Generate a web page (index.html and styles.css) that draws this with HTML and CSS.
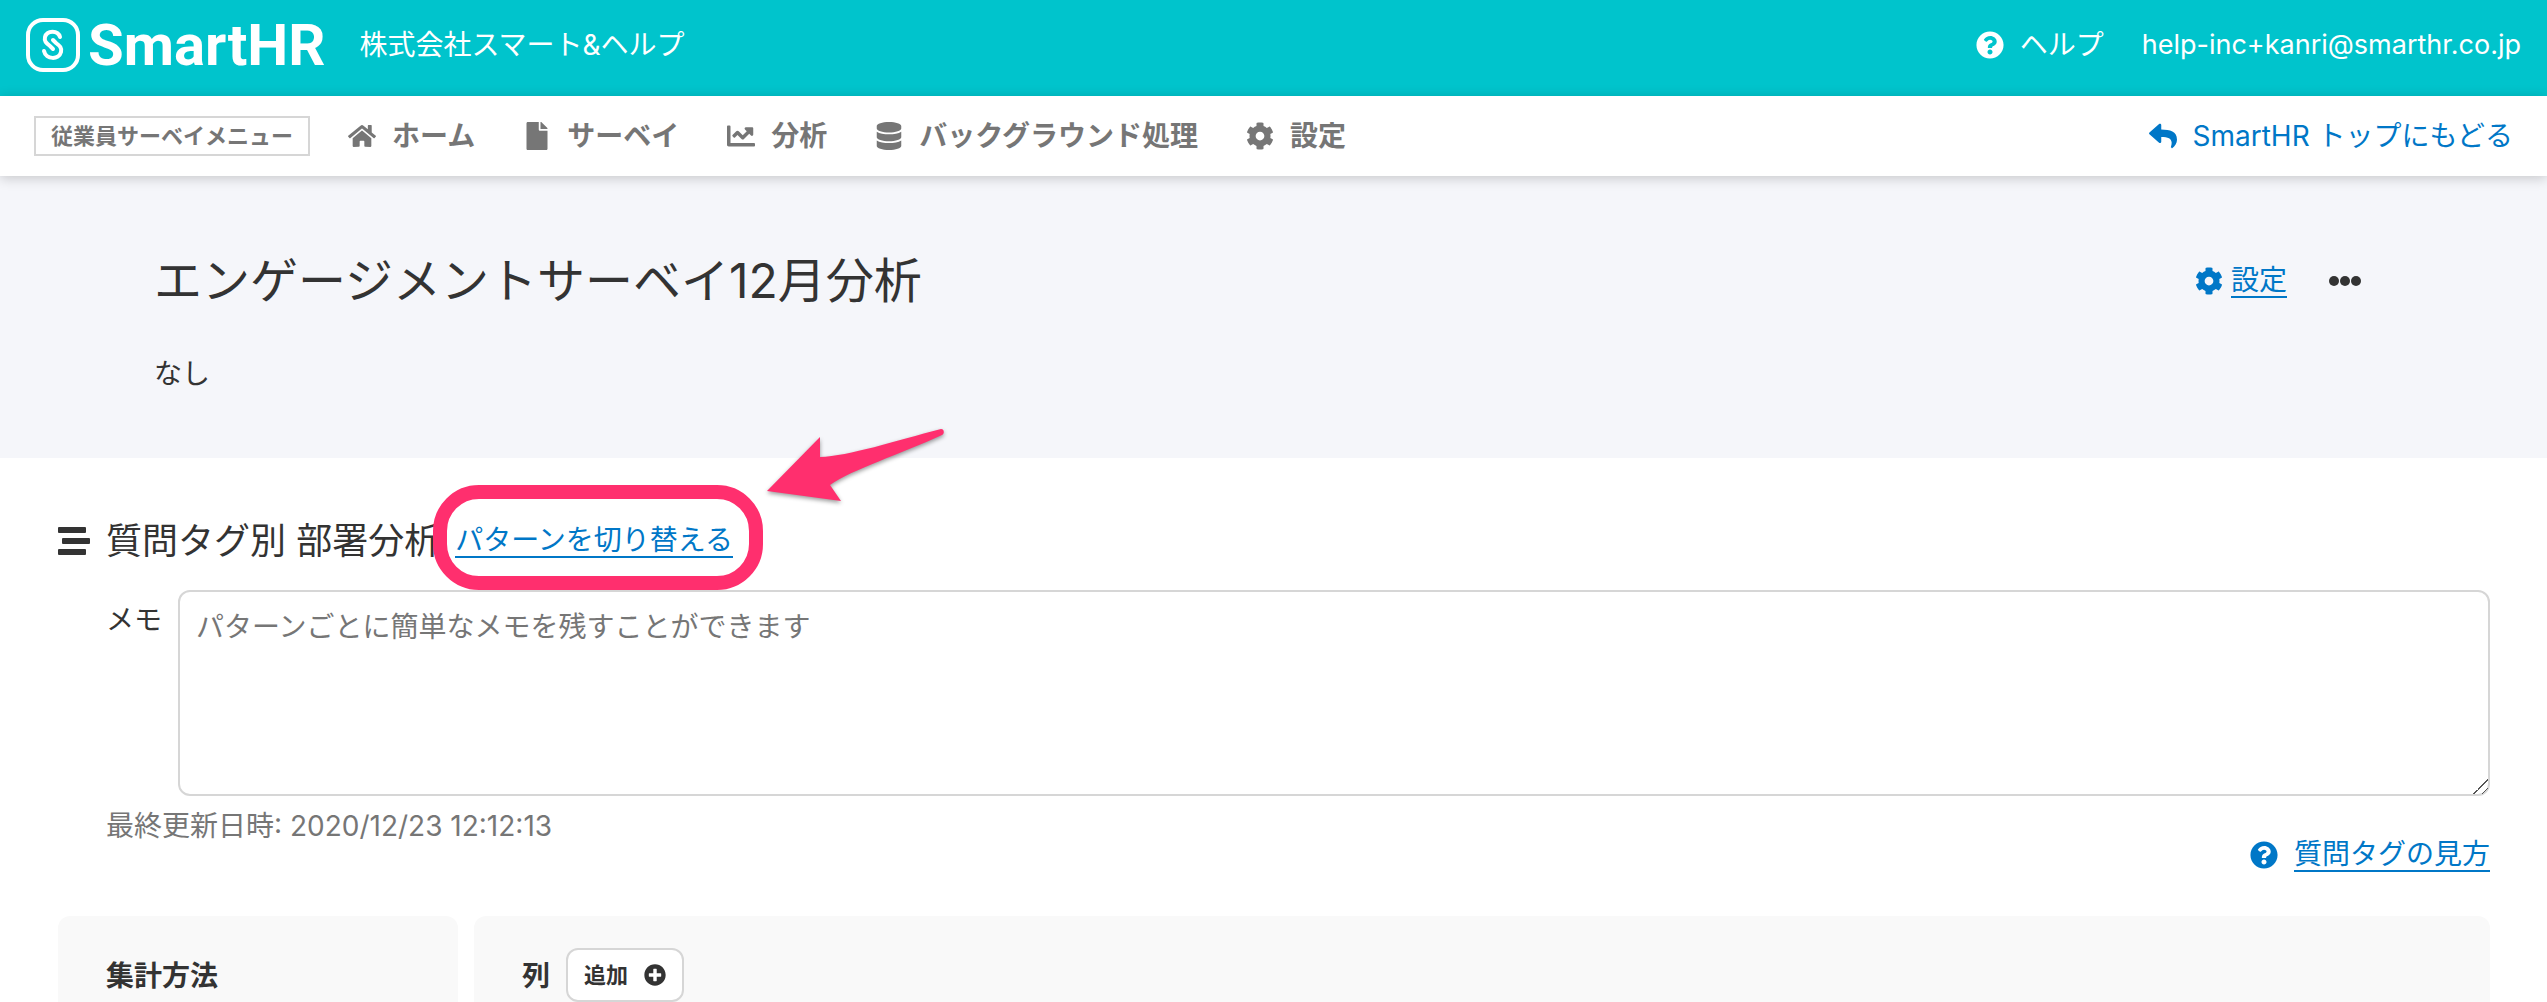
FILE: index.html
```html
<!DOCTYPE html>
<html lang="ja">
<head>
<meta charset="utf-8">
<title>エンゲージメントサーベイ12月分析 | SmartHR</title>
<link rel="stylesheet" href="styles.css">
</head>
<body>
<svg class="sprite" aria-hidden="true">
  <symbol id="gear" viewBox="0 0 512 512"><path fill="currentColor" d="M487.4 315.7l-42.6-24.6c4.3-23.2 4.3-47 0-70.2l42.6-24.6c4.9-2.8 7.1-8.6 5.5-14-11.1-35.6-30-67.8-54.7-94.6-3.8-4.1-10-5.1-14.8-2.3L380.8 110c-17.9-15.4-38.5-27.3-60.8-35.1V25.8c0-5.6-3.9-10.5-9.4-11.7-36.7-8.2-74.3-7.8-109.2 0-5.5 1.2-9.4 6.1-9.4 11.7V75c-22.2 7.9-42.8 19.8-60.8 35.1L88.7 85.5c-4.9-2.8-11-1.9-14.8 2.3-24.7 26.7-43.6 58.9-54.7 94.6-1.7 5.4.6 11.2 5.5 14L67.3 221c-4.3 23.2-4.3 47 0 70.2l-42.6 24.6c-4.9 2.8-7.1 8.6-5.5 14 11.1 35.6 30 67.8 54.7 94.6 3.8 4.1 10 5.1 14.8 2.3l42.6-24.6c17.9 15.4 38.5 27.3 60.8 35.1v49.2c0 5.6 3.9 10.5 9.4 11.7 36.7 8.2 74.3 7.8 109.2 0 5.5-1.2 9.4-6.1 9.4-11.7v-49.2c22.2-7.9 42.8-19.8 60.8-35.1l42.6 24.6c4.9 2.8 11 1.9 14.8-2.3 24.7-26.7 43.6-58.9 54.7-94.6 1.5-5.5-.7-11.3-5.6-14.1zM256 336c-44.1 0-80-35.9-80-80s35.9-80 80-80 80 35.9 80 80-35.9 80-80 80z"/></symbol>
  <symbol id="question" viewBox="0 0 512 512"><path fill="currentColor" d="M504 256c0 136.997-111.043 248-248 248S8 392.997 8 256C8 119.083 119.043 8 256 8s248 111.083 248 248zM262.655 90c-54.497 0-89.255 22.957-116.549 63.758-3.536 5.286-2.353 12.415 2.715 16.258l34.699 26.31c5.205 3.947 12.621 3.008 16.665-2.122 17.864-22.658 30.113-35.797 57.303-35.797 20.429 0 45.698 13.148 45.698 32.958 0 14.976-12.363 22.667-32.534 33.976C247.128 238.528 216 254.941 216 296v4c0 6.627 5.373 12 12 12h56c6.627 0 12-5.373 12-12v-1.333c0-28.462 83.186-29.647 83.186-106.667 0-58.002-60.165-102-116.531-102zM256 338c-25.365 0-46 20.635-46 46 0 25.364 20.635 46 46 46s46-20.636 46-46c0-25.365-20.635-46-46-46z"/></symbol>
</svg>

<header class="header">
  <a class="logo" href="#" aria-label="SmartHR">
    <svg class="logo-mark" viewBox="0 0 54 54" fill="none" stroke="currentColor" stroke-linecap="round" aria-hidden="true">
      <rect x="2" y="2" width="50" height="50" rx="15" stroke-width="4"/>
      <path d="M34 19C32 12 21 12 19 19C18 23 20 25 24 28L27 31" stroke-width="4"/>
      <path d="M18 33C20 42 33 42 35 34C36 30 34 28 30 25L27 22" stroke-width="4"/>
    </svg>
    <span class="logo-text">SmartHR</span>
  </a>
  <span class="company">株式会社スマート&amp;ヘルプ</span>
  <a class="header-link header-help" href="#"><svg class="icon"><use href="#question"/></svg>ヘルプ</a>
  <a class="header-link header-mail" href="#">help-inc+kanri@smarthr.co.jp</a>
</header>

<nav class="nav">
  <span class="nav-label">従業員サーベイメニュー</span>
  <ul class="nav-list">
    <li><a class="nav-item" href="#"><svg class="icon" viewBox="0 0 576 512"><path fill="currentColor" d="M280.37 148.26L96 300.11V464a16 16 0 0 0 16 16l112.06-.29a16 16 0 0 0 15.92-16V368a16 16 0 0 1 16-16h64a16 16 0 0 1 16 16v95.64a16 16 0 0 0 16 16.05L464 480a16 16 0 0 0 16-16V300L295.67 148.26a12.19 12.19 0 0 0-15.3 0zM571.6 251.47L488 182.56V44.05a12 12 0 0 0-12-12h-56a12 12 0 0 0-12 12v72.61L318.47 43a48 48 0 0 0-61 0L4.34 251.47a12 12 0 0 0-1.6 16.9l25.5 31A12 12 0 0 0 45.15 301l235.22-193.74a12.19 12.19 0 0 1 15.3 0L530.9 301a12 12 0 0 0 16.9-1.6l25.5-31a12 12 0 0 0-1.7-16.93z"/></svg>ホーム</a></li>
    <li><a class="nav-item" href="#"><svg class="icon" viewBox="0 0 384 512"><path fill="currentColor" d="M224 136V0H24C10.700 0 0 10.700 0 24v464c0 13.300 10.700 24 24 24h336c13.300 0 24-10.700 24-24V160H248c-13.200 0-24-10.800-24-24zm160-14.100v6.100H256V0h6.100c6.400 0 12.500 2.500 17 7l97.900 98c4.500 4.500 7 10.600 7 16.900z"/></svg>サーベイ</a></li>
    <li><a class="nav-item" href="#"><svg class="icon" viewBox="0 0 512 512"><path fill="currentColor" d="M496 384H64V80c0-8.840-7.160-16-16-16H16C7.160 64 0 71.160 0 80v336c0 17.670 14.330 32 32 32h464c8.840 0 16-7.160 16-16v-32c0-8.840-7.160-16-16-16zM464 96H345.940c-21.380 0-32.090 25.850-16.970 40.970l32.400 32.400L288 242.750l-73.370-73.370c-12.500-12.500-32.760-12.500-45.250 0l-68.690 68.690c-6.250 6.250-6.250 16.380 0 22.630l22.620 22.620c6.250 6.250 16.380 6.250 22.630 0L192 237.250l73.370 73.370c12.500 12.500 32.760 12.500 45.250 0l96-96 32.400 32.400c15.120 15.120 40.970 4.410 40.970-16.970V112c.01-8.840-7.150-16-15.990-16z"/></svg>分析</a></li>
    <li><a class="nav-item" href="#"><svg class="icon" viewBox="0 0 448 512"><path fill="currentColor" d="M448 73.143v45.714C448 159.143 347.667 192 224 192S0 159.143 0 118.857V73.143C0 32.857 100.333 0 224 0s224 32.857 224 73.143zM448 176v102.857C448 319.143 347.667 352 224 352S0 319.143 0 278.857V176c48.125 33.143 136.208 48.572 224 48.572S399.874 209.143 448 176zm0 160v102.857C448 479.143 347.667 512 224 512S0 479.143 0 438.857V336c48.125 33.143 136.208 48.572 224 48.572S399.874 369.143 448 336z"/></svg>バックグラウンド処理</a></li>
    <li><a class="nav-item" href="#"><svg class="icon"><use href="#gear"/></svg>設定</a></li>
  </ul>
  <a class="nav-back" href="#"><svg class="icon" viewBox="0 0 512 512"><path fill="currentColor" d="M8.309 189.836L184.313 37.851C199.719 24.546 224 35.347 224 56.015v80.053c160.629 1.839 288 34.032 288 186.258 0 61.441-39.581 122.309-83.333 154.132-13.653 9.931-33.111-2.533-28.077-18.631 45.344-145.012-21.507-183.510-176.590-185.742V360c0 20.700-24.300 31.453-39.687 18.164l-176.004-152c-11.071-9.562-11.086-26.753 0-36.328z"/></svg>SmartHR トップにもどる</a>
</nav>

<section class="hero">
  <div class="hero-top">
    <h1 class="hero-title">エンゲージメントサーベイ12月分析</h1>
    <a class="icon-link" href="#"><svg class="icon"><use href="#gear"/></svg><span class="underlined">設定</span></a>
    <button class="more" type="button" aria-label="その他"><svg class="more-icon" viewBox="0 0 32 10" fill="currentColor"><circle cx="5" cy="5" r="5"/><circle cx="16" cy="5" r="5"/><circle cx="27" cy="5" r="5"/></svg></button>
  </div>
  <p class="hero-text">なし</p>
</section>

<main class="main">
  <div class="section-head">
    <svg class="section-icon" viewBox="0 0 32 28" fill="currentColor" aria-hidden="true"><rect width="28" height="6" rx="1"/><rect x="4" y="11" width="28" height="6" rx="1"/><rect y="22" width="28" height="6" rx="1"/></svg>
    <h2 class="section-title">質問タグ別 部署分析</h2>
    <div class="switch">
      <a class="underlined" href="#">パターンを切り替える</a>
      <span class="switch-ring"></span>
      <svg class="switch-arrow" viewBox="0 0 190 84" aria-hidden="true"><path fill="#ff2f6e" d="M6 64L59 10V30C88 29 134 14 180 2C183 2 184 6 181 8C140 27 92 42 69 58L80 74Z"/></svg>
    </div>
  </div>

  <div class="memo">
    <label class="memo-label" for="memo">メモ</label>
    <textarea class="memo-input" id="memo" placeholder="パターンごとに簡単なメモを残すことができます"></textarea>
  </div>
  <div class="memo-foot">
    <p class="updated">最終更新日時: 2020/12/23 12:12:13</p>
    <a class="icon-link icon-link-wide" href="#"><svg class="icon"><use href="#question"/></svg><span class="underlined">質問タグの見方</span></a>
  </div>

  <div class="panels">
    <section class="panel">
      <h3 class="panel-title">集計方法</h3>
    </section>
    <section class="panel">
      <h3 class="panel-title">列</h3>
      <button class="add" type="button">追加<svg class="add-icon" viewBox="0 0 512 512"><path fill="currentColor" d="M256 8C119 8 8 119 8 256s111 248 248 248 248-111 248-248S393 8 256 8zm144 276c0 6.600-5.400 12-12 12h-92v92c0 6.600-5.400 12-12 12h-56c-6.600 0-12-5.400-12-12v-92h-92c-6.600 0-12-5.400-12-12v-56c0-6.600 5.400-12 12-12h92v-92c0-6.600 5.400-12 12-12h56c6.600 0 12 5.400 12 12v92h92c6.600 0 12 5.400 12 12v56z"/></svg></button>
    </section>
  </div>
</main>
</body>
</html>
```
FILE: styles.css
```css
* {
  box-sizing: border-box;
}

body {
  display: flex;
  flex-direction: column;
  min-height: 100vh;
  margin: 0;
  background: #fff;
  color: #333;
  font-family: Inter, "Noto Sans CJK JP", sans-serif;
  font-size: 28px;
  line-height: 32px;
}

h1, h2, h3, p, ul {
  margin: 0;
  padding: 0;
  font-weight: 400;
}

a {
  color: #0077c7;
  text-decoration: none;
  white-space: nowrap;
}

button {
  color: inherit;
  font: inherit;
  cursor: pointer;
}

.sprite {
  position: absolute;
  width: 0;
  height: 0;
}

.icon {
  flex: none;
  width: 28px;
  height: 28px;
}

.underlined {
  display: block;
  border-bottom: 2px solid #0077c7;
}

/* Header */
.header {
  display: flex;
  align-items: center;
  height: 96px;
  padding: 0 26px 6px;
  background: #00c4cc;
  color: #fff;
}

.logo {
  display: flex;
  align-items: center;
  gap: 8px;
  margin-right: 34px;
  color: inherit;
}

.logo-mark {
  width: 54px;
  height: 54px;
}

.logo-text {
  font-family: Roboto, sans-serif;
  font-size: 58px;
  font-weight: 700;
  line-height: 60px;
}

.header-link {
  display: flex;
  align-items: center;
  color: inherit;
}

.header-help {
  gap: 16px;
  margin-left: auto;
  margin-right: 38px;
}

.header-mail {
  font-size: 27px;
}

/* Navigation */
.nav {
  position: relative;
  display: flex;
  align-items: center;
  height: 80px;
  padding: 0 34px;
  background: #fff;
  box-shadow: 0 2px 12px rgba(0, 0, 0, 0.2);
  color: #767676;
}

.nav-label {
  margin-right: 38px;
  padding: 0 15px;
  border: 2px solid #d6d6d6;
  font-size: 22px;
  font-weight: 700;
  line-height: 36px;
}

.nav-list {
  display: flex;
  gap: 48px;
  list-style: none;
}

.nav-item,
.nav-back {
  display: flex;
  align-items: center;
  gap: 16px;
}

.nav-item {
  color: inherit;
  font-weight: 700;
}

.nav-back {
  margin-left: auto;
}

/* Page title */
.hero {
  padding: 68px 154px;
  background: #f5f6fa;
}

.hero-top {
  display: flex;
  align-items: center;
  height: 74px;
}

.hero-title {
  flex: 1;
  font-size: 48px;
  line-height: 72px;
}

.hero-text {
  margin-top: 40px;
}

.icon-link {
  display: flex;
  align-items: center;
  gap: 8px;
}

.icon-link-wide {
  gap: 16px;
}

.more {
  display: flex;
  margin-left: 10px;
  padding: 16px 32px;
  border: 0;
  background: none;
}

.more-icon {
  width: 32px;
  height: 10px;
}

/* Pattern section */
.main {
  display: flex;
  flex: 1;
  flex-direction: column;
  padding: 58px 57px 0 58px;
}

.section-head {
  display: flex;
  align-items: center;
  height: 50px;
  margin-bottom: 24px;
}

.section-icon {
  width: 32px;
  height: 28px;
  margin-right: 16px;
}

.section-title {
  margin-right: 15px;
  font-size: 36px;
  line-height: 48px;
}

.switch {
  position: relative;
}

.switch-ring {
  position: absolute;
  inset: -39px -30px -32px -22px;
  border: 14px solid #ff2f6e;
  border-radius: 46px;
  pointer-events: none;
}

.switch-arrow {
  position: absolute;
  top: -97px;
  left: 306px;
  width: 190px;
  height: 84px;
  filter: drop-shadow(0 2px 2px rgba(0, 0, 0, 0.4));
  pointer-events: none;
}

.memo {
  display: flex;
  padding-left: 48px;
}

.memo-label {
  width: 72px;
  line-height: 60px;
}

.memo-input {
  flex: 1;
  height: 206px;
  padding: 14px 16px;
  border: 2px solid #d6d6d6;
  border-radius: 12px;
  color: inherit;
  font: inherit;
  line-height: 42px;
}

.memo-input::placeholder {
  color: #767676;
}

.memo-input::-webkit-resizer {
  background: linear-gradient(135deg, transparent 50%, #555 50% 56%, transparent 56% 77%, #555 77% 83%, transparent 83%);
}

.memo-foot {
  display: flex;
  align-items: flex-start;
  justify-content: space-between;
  padding-left: 48px;
}

.updated {
  margin-top: 14px;
  color: #767676;
}

.memo-foot .icon-link {
  margin-top: 42px;
}

/* Aggregation panels */
.panels {
  display: grid;
  flex: 1;
  grid-template-columns: 400px 1fr;
  gap: 16px;
  margin-top: 44px;
}

.panel {
  display: flex;
  align-items: flex-start;
  gap: 16px;
  padding: 32px 48px 0;
  border-radius: 12px 12px 0 0;
  background: #f9f9f9;
}

.panel-title {
  font-size: 28px;
  font-weight: 700;
  line-height: 56px;
}

.add {
  display: flex;
  align-items: center;
  gap: 16px;
  padding: 9px 16px;
  border: 2px solid #d6d6d6;
  border-radius: 12px;
  background: #fff;
  font-size: 22px;
  font-weight: 700;
}

.add-icon {
  width: 22px;
  height: 22px;
}
```
